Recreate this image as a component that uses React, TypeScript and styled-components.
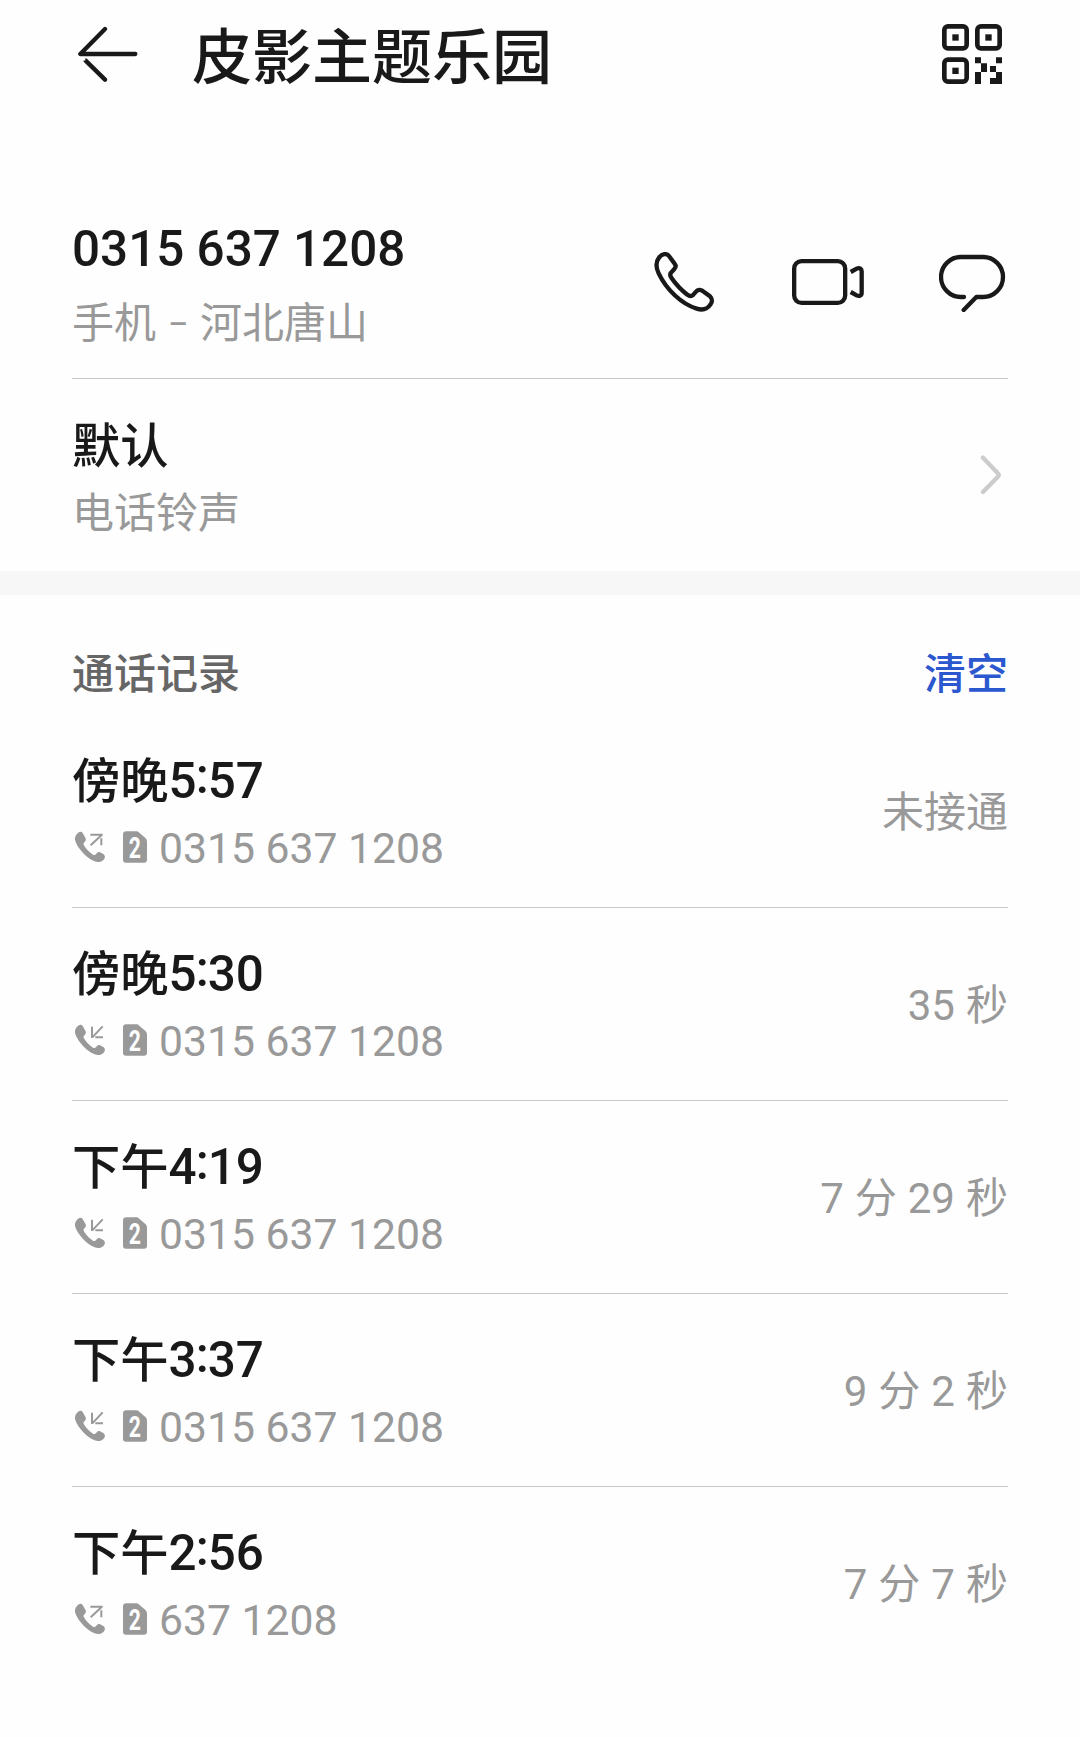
import React from 'react';
import styled, { createGlobalStyle } from 'styled-components';

const INK = '#191919';
const MUTED = '#999999';

const GlobalStyle = createGlobalStyle`
  html, body { margin: 0; padding: 0; background: #fefefe; }
  body { font-family: Roboto, "Noto Sans CJK SC", sans-serif; color: ${INK}; }
  * { box-sizing: border-box; }
`;

const Page = styled.main`
  width: 1080px;
  height: 1737px;
  display: flex;
  flex-direction: column;
  overflow: hidden;
  background: #fefefe;
`;

const Header = styled.header`
  height: 108px;
  padding: 0 78px 0 77px;
  display: flex;
  align-items: center;
`;

const IconButton = styled.button`
  display: flex;
  padding: 0;
  border: 0;
  background: none;
  color: inherit;
`;

const Title = styled.h1`
  flex: 1;
  margin: 0 0 0 53px;
  font: 500 60px/103px "Noto Sans CJK SC", sans-serif;
  height: 106px;
`;

const Section = styled.section`
  padding: 0 72px;
`;

const Item = styled.div<{ $height: number; $top: number; $line?: boolean }>`
  height: ${(p) => p.$height}px;
  padding-top: ${(p) => p.$top}px;
  display: flex;
  justify-content: space-between;
  align-items: flex-start;
  border-bottom: ${(p) => (p.$line ? '1px solid #c8c8c8' : '0')};
`;

const Lines = styled.div`
  display: flex;
  flex-direction: column;
`;

const Primary = styled.div<{ $height: number }>`
  height: ${(p) => p.$height}px;
  line-height: ${(p) => p.$height}px;
  font-size: 48.3px;
  font-weight: 500;
  white-space: nowrap;
`;

const Digits = styled.span`
  font-size: 49.4px;
  font-weight: 500;
`;

const Colon = styled.span`
  margin: 0 -1px;
  line-height: 0;
  vertical-align: 5px;
`;

const Secondary = styled.div<{ $height: number }>`
  height: ${(p) => p.$height}px;
  line-height: ${(p) => p.$height}px;
  display: flex;
  align-items: center;
  font-size: 42px;
  color: ${MUTED};
  white-space: pre;
`;

const Dash = styled.span`
  width: 44px;
  text-align: center;
  font-size: 30px;
  font-weight: 500;
`;

const Actions = styled.div`
  display: flex;
  align-items: center;
  gap: 75px;
  margin-top: 39px;
  margin-right: 2px;
`;

const ChevronBox = styled.div`
  display: flex;
  margin: 42px 6px 0 0;
`;

const Band = styled.div`
  flex: none;
  height: 24px;
  background: #f7f7f7;
`;

const LogHeader = styled.div`
  height: 120px;
  padding-top: 42px;
  display: flex;
  justify-content: space-between;
  font-size: 42px;
  line-height: 76px;
  font-weight: 500;
  color: #666666;
`;

const Clear = styled.button`
  height: 76px;
  padding: 0;
  border: 0;
  background: none;
  font: inherit;
  color: #2c58cf;
`;

const Number = styled.span`
  margin-left: 12px;
  font-size: 42.7px;
`;

const Glyph = styled.svg<{ $left?: number }>`
  flex: none;
  display: block;
  overflow: visible;
  margin-left: ${(p) => p.$left ?? 0}px;
  margin-bottom: 3px;
`;

const Duration = styled.div`
  height: 132px;
  line-height: 132px;
  font-size: 42px;
  word-spacing: 0.6px;
  color: ${MUTED};
`;

const BackIcon = () => (
  <svg width="62" height="56" viewBox="51 47 186 168" fill="none" stroke={INK} strokeWidth="13" strokeLinecap="round">
    <path d="M135 56 L61 131 H226" strokeLinejoin="round" />
    <path d="M135 208 L77 151" />
    <path d="M60 147 H76" stroke="#fefefe" strokeWidth="7" strokeLinecap="butt" />
  </svg>
);

const QrIcon = () => (
  <svg width="60" height="60" viewBox="36 27 180 180" fill={INK}>
    {[[36, 27], [135, 27], [36, 127]].map(([x, y]) => (
      <g key={`${x}-${y}`}>
        <rect x={x + 7} y={y + 7} width="67" height="66" rx="11" fill="none" stroke={INK} strokeWidth="14" />
        <rect x={x + 31} y={y + 31} width="19" height="19" />
      </g>
    ))}
    <path d="M135 127h18v18h18v26h-18v-26h-18zM198 127h18v18h-18zM180 153h18v18h18v36h-36v-18h18v-18h-18zM135 171h18v36h-18z" />
  </svg>
);

const PhoneIcon = () => (
  <svg width="63" height="60" viewBox="42 51 189 180" fill="none" stroke={INK} strokeWidth="13" strokeLinejoin="round">
    <path d="M57 68C66 56 80 54 87 63L104 86C109 93 108 97 103 102L94 112C89 117 90 122 94 128C108 148 124 165 142 179C149 185 154 185 160 179L168 170C173 164 182 163 188 168L210 184C218 191 217 201 211 209C201 224 186 226 170 221C125 207 80 165 56 115C47 96 46 82 57 68Z" />
  </svg>
);

const VideoIcon = () => (
  <svg width="72" height="60" viewBox="456 51 216 180" fill="none" stroke={INK} strokeWidth="13">
    <rect x="462.500" y="78.500" width="153" height="125" rx="22" />
    <path d="M632 111L650 101C658 97 665 101 665 109V173C665 182 658 185 650 181L632 171" />
  </svg>
);

const MessageIcon = () => (
  <svg width="67" height="60" viewBox="897 51 201 180" fill="none" stroke={INK} strokeWidth="13" strokeLinecap="round" strokeLinejoin="round">
    <path d="M972 186H963A60 60 0 0 1 963 66H1029A60 60 0 0 1 1029 186H1009L971 225" />
  </svg>
);

const Chevron = () => (
  <svg width="22" height="40" viewBox="240 45 66 120" fill="none" stroke="#cccccc" strokeWidth="13" strokeLinecap="round" strokeLinejoin="round">
    <path d="M249 53L293 99Q299 105 293 111L249 156" />
  </svg>
);

const CallIcon = ({ incoming }: { incoming: boolean }) => (
  <Glyph $left={3} width="31" height="32" viewBox="45 570 93 96" fill={MUTED}>
    <path d="M50 580C56 571 64 570 68 576L76 590C79 595 78 599 74 603C69 607 70 610 73 615C80 626 88 634 99 641C103 643 106 642 109 638C113 633 118 632 123 635L131 640C136 644 136 651 131 656C122 665 112 664 102 660C77 649 56 624 47 603C43 594 45 586 50 580Z" />
    <path
      d={incoming ? 'M96 578V612M128 577L97 610M106 610H129' : 'M91 581H128M92 613L125 582M124 592V613'}
      fill="none"
      stroke={MUTED}
      strokeWidth="6"
    />
  </Glyph>
);

const SimIcon = () => (
  <Glyph $left={17} width="24" height="32" viewBox="189 570 72 96">
    <path d="M199 571H229Q234 571 238 575L257 592Q261 596 261 602V656Q261 665 252 665H198Q189 665 189 656V580Q189 571 199 571Z" fill={MUTED} />
    <text transform="translate(224.500 650) scale(.74 1)" textAnchor="middle" fontFamily="Roboto" fontWeight="700" fontSize="86" fill="#ffffff">2</text>
  </Glyph>
);

const calls = [
  { period: '傍晚', h: '5', m: '57', incoming: false, number: '0315 637 1208', duration: '未接通' },
  { period: '傍晚', h: '5', m: '30', incoming: true, number: '0315 637 1208', duration: '35 秒' },
  { period: '下午', h: '4', m: '19', incoming: true, number: '0315 637 1208', duration: '7 分 29 秒' },
  { period: '下午', h: '3', m: '37', incoming: true, number: '0315 637 1208', duration: '9 分 2 秒' },
  { period: '下午', h: '2', m: '56', incoming: false, number: '637 1208', duration: '7 分 7 秒' },
];

export default function App() {
  return (
    <>
      <GlobalStyle />
      <Page>
        <Header>
          <IconButton aria-label="返回"><BackIcon /></IconButton>
          <Title>皮影主题乐园</Title>
          <IconButton aria-label="二维码"><QrIcon /></IconButton>
        </Header>
        <Section>
          <Item $height={271} $top={105} $line>
            <Lines>
              <Primary $height={72}><Digits>0315 637 1208</Digits></Primary>
              <Secondary $height={78}>手机<Dash> – </Dash>河北唐山</Secondary>
            </Lines>
            <Actions>
              <IconButton aria-label="拨打电话"><PhoneIcon /></IconButton>
              <IconButton aria-label="视频通话"><VideoIcon /></IconButton>
              <IconButton aria-label="发送信息"><MessageIcon /></IconButton>
            </Actions>
          </Item>
          <Item $height={192} $top={34}>
            <Lines>
              <Primary $height={68}>默认</Primary>
              <Secondary $height={66}>电话铃声</Secondary>
            </Lines>
            <ChevronBox><Chevron /></ChevronBox>
          </Item>
        </Section>
        <Band />
        <Section>
          <LogHeader>
            <span>通话记录</span>
            <Clear>清空</Clear>
          </LogHeader>
          {calls.map((call, i) => (
            <Item key={i} $height={193} $top={32} $line={i < calls.length - 1}>
              <Lines>
                <Primary $height={68}>
                  {call.period}
                  <Digits>{call.h}<Colon>:</Colon>{call.m}</Digits>
                </Primary>
                <Secondary $height={66}>
                  <CallIcon incoming={call.incoming} />
                  <SimIcon />
                  <Number>{call.number}</Number>
                </Secondary>
              </Lines>
              <Duration>{call.duration}</Duration>
            </Item>
          ))}
        </Section>
      </Page>
    </>
  );
}
